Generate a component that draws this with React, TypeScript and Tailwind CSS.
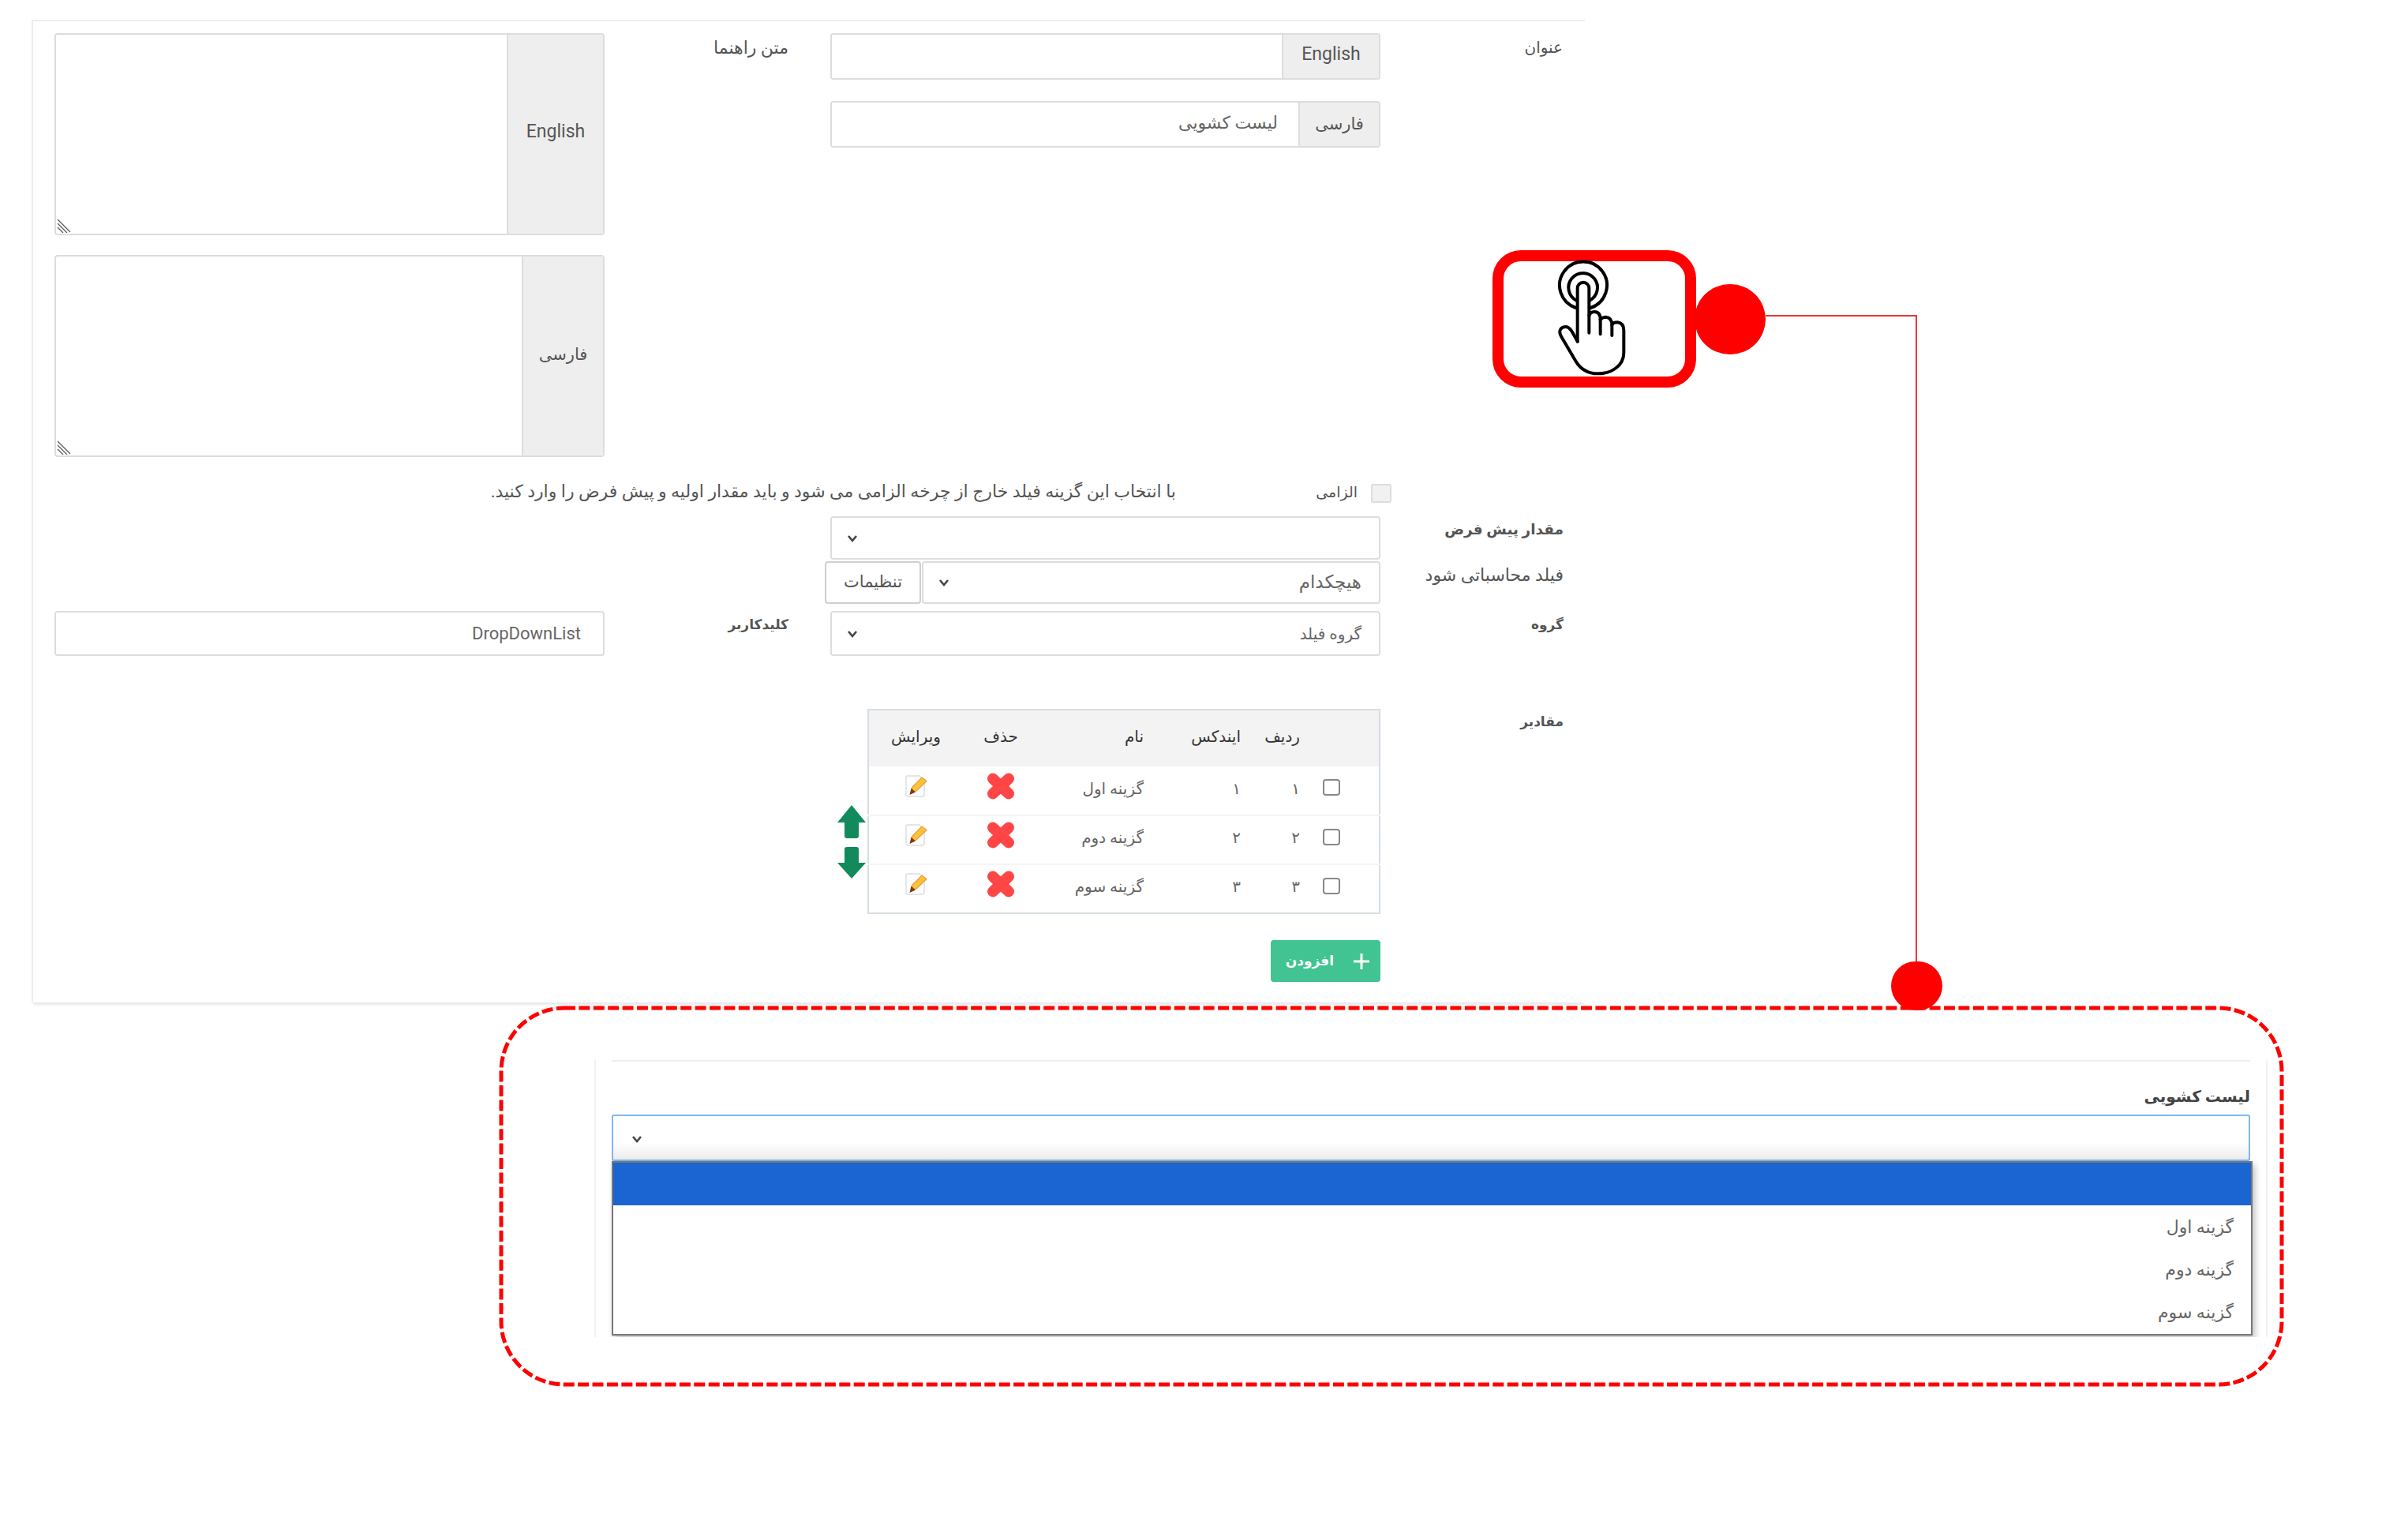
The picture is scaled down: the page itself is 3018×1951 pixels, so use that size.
const font = "font-['Roboto','DejaVu_Sans',sans-serif]";

function Chevron({ className }: { className?: string }) {
  return (
    <svg width="14" height="10" viewBox="0 0 14 10" className={className}>
      <path d="M2 2 L7 8 L12 2" fill="none" stroke="#444" strokeWidth="2.6" />
    </svg>
  );
}

function ResizeGrip() {
  return (
    <svg width="18" height="18" viewBox="0 0 18 18" className="absolute left-[1px] bottom-[1px]">
      <path d="M1 1 L17 17 M1 6 L13 18 M1 11 L8 18" stroke="#555" strokeWidth="1.2" fill="none" />
    </svg>
  );
}

function Addon({ children, className }: { children: React.ReactNode; className: string }) {
  return (
    <div className={`flex items-center justify-center bg-[#eeeeee] border-l-2 border-[#dddddd] text-[#555] ${className}`}>
      {children}
    </div>
  );
}

function InputGroup({ label, value, addonWidth, latin }: { label: string; value?: string; addonWidth: string; latin?: boolean }) {
  return (
    <div className="flex h-[59px] border-2 border-[#dddddd] rounded-[4px] overflow-hidden">
      <div className="flex-1 flex items-center justify-end pr-[26px] pb-[4px] text-[22px] text-[#666]">{value}</div>
      <Addon className={`${addonWidth} ${latin ? 'text-[23px] pb-[4px]' : 'text-[21px]'}`}>{label}</Addon>
    </div>
  );
}

function TextareaGroup({ label, addonWidth, latin }: { label: string; addonWidth: string; latin?: boolean }) {
  return (
    <div className="relative flex h-[256px] border-2 border-[#dddddd] rounded-[4px] overflow-hidden">
      <div className="flex-1" />
      <Addon className={`${addonWidth} ${latin ? 'text-[23px] pb-[6px]' : 'text-[21px] pb-[2px]'}`}>{label}</Addon>
      <ResizeGrip />
    </div>
  );
}

function SelectBox({ value, className }: { value?: string; className: string }) {
  return (
    <div className={`flex items-center justify-between border-2 border-[#dddddd] rounded-[4px] pl-[19px] pr-[22px] text-[#666] ${className}`}>
      <Chevron />
      <span>{value}</span>
    </div>
  );
}

function FieldLabel({ children, className }: { children: React.ReactNode; className: string }) {
  return <div className={`text-right text-[#555] ${className}`}>{children}</div>;
}

function DeleteIcon() {
  return (
    <svg width="36" height="34" viewBox="0 0 36 34" className="mx-auto">
      <path d="M8 7.5 L28 26.5 M28 7.5 L8 26.5" stroke="#ff4545" strokeWidth="14" strokeLinecap="round" fill="none" />
    </svg>
  );
}

function EditIcon() {
  return (
    <svg width="30" height="30" viewBox="0 0 30 30" className="mx-auto">
      <path d="M4 2 H19 L25 8 V25 Q25 28 22 28 H4 Q2 28 2 26 V4 Q2 2 4 2 Z" fill="#fdfdfd" stroke="#e6e6e6" strokeWidth="2" />
      <path d="M8 24 L10 16 L22 4 L28 8.5 L15 21 Z" fill="#fbc531" stroke="#f0964a" strokeWidth="1.2" />
      <path d="M6.5 26 L8.5 17.5 L14 22.5 Z" fill="#7a3d12" />
    </svg>
  );
}

function ArrowUp() {
  return (
    <svg width="38" height="42" viewBox="0 0 38 42">
      <path d="M19 0 L37 22 H28 V39 Q28 42 25 42 H13 Q10 42 10 39 V22 H1 Z" fill="#128a5c" />
    </svg>
  );
}

function ArrowDown() {
  return (
    <svg width="38" height="40" viewBox="0 0 38 40">
      <path d="M19 40 L37 20 H28 V3 Q28 0 25 0 H13 Q10 0 10 3 V20 H1 Z" fill="#128a5c" />
    </svg>
  );
}

const rows = [
  { n: '۱', name: 'گزینه اول' },
  { n: '۲', name: 'گزینه دوم' },
  { n: '۳', name: 'گزینه سوم' },
];

function ValuesTable() {
  return (
    <table className="w-[650px] h-[260px] table-fixed border-2 border-[#d6dee4] border-collapse text-[20px]">
      <thead>
        <tr className="bg-[#f3f3f3] h-[72px] text-[#333]">
          <th className="w-[120px] font-normal text-center pb-[6px]">ویرایش</th>
          <th className="w-[96px] font-normal text-center pb-[6px]">حذف</th>
          <th className="w-[133px] font-normal text-right pb-[6px]">نام</th>
          <th className="w-[123px] font-normal text-right pb-[6px]">ایندکس</th>
          <th className="w-[75px] font-normal text-right pb-[6px]">ردیف</th>
          <th />
        </tr>
      </thead>
      <tbody className="text-[#666]">
        {rows.map((r) => (
          <tr key={r.n} className="h-[62px] border-b-2 border-[#f5f5f5] last:border-b-0">
            <td className="pb-[12px]"><EditIcon /></td>
            <td className="pb-[12px]"><DeleteIcon /></td>
            <td className="text-right pb-[6px]">{r.name}</td>
            <td className="text-right pb-[6px]">{r.n}</td>
            <td className="text-right pb-[6px]">{r.n}</td>
            <td className="pl-[29px] pb-[8px]">
              <div className="w-[22px] h-[21px] border-2 border-[#888] rounded-[4px]" />
            </td>
          </tr>
        ))}
      </tbody>
    </table>
  );
}

function MainForm() {
  return (
    <div className="ml-[40px] mt-[24px] w-[1968px] h-[1245px] border-t-2 border-l-2 border-[#eeeeee] pl-[27px] pt-[15px] shadow-[0_5px_3px_-2px_#e8e8e8]">
      <div className="flex items-start">
        <div className="w-[697px] flex flex-col gap-[25px]">
          <TextareaGroup label="English" addonWidth="w-[122px]" latin />
          <TextareaGroup label="فارسی" addonWidth="w-[103px]" />
        </div>
        <FieldLabel className="w-[233px] pt-[2px] text-[22px]">متن راهنما</FieldLabel>
        <div className="ml-[53px] w-[697px] flex flex-col gap-[27px]">
          <InputGroup label="English" addonWidth="w-[123px]" latin />
          <InputGroup label="فارسی" value="لیست کشویی" addonWidth="w-[102px]" />
        </div>
        <FieldLabel className="w-[231px] pt-[3px] text-[20px]">عنوان</FieldLabel>
      </div>

      <div className="flex items-center h-[24px] mt-[34px] text-[#555]">
        <div dir="rtl" className="w-[1421px] text-[22px] mb-[6px] whitespace-nowrap">با انتخاب این گزینه فیلد خارج از چرخه الزامی می شود و باید مقدار اولیه و پیش فرض را وارد کنید.</div>
        <div className="w-[230px] text-right text-[19px] mb-[2px]">الزامی</div>
        <div className="ml-[17px] w-[26px] h-[24px] bg-[#f1f1f1] border-2 border-[#dddddd] rounded-[3px]" />
      </div>

      <div className="flex items-center mt-[17px]">
        <SelectBox className="ml-[983px] w-[697px] h-[55px]" />
        <FieldLabel className="w-[232px] font-bold text-[18.5px] mb-[20px]">مقدار پیش فرض</FieldLabel>
      </div>

      <div className="flex items-center mt-[2px]">
        <button className="ml-[976px] w-[122px] h-[54px] border-2 border-[#cfcfcf] rounded-[4px] text-[21px] text-[#555]">تنظیمات</button>
        <SelectBox value="هیچکدام" className="ml-[1px] w-[581px] h-[54px] text-[23px]" />
        <FieldLabel className="w-[232px] mb-[20px] text-[22px]">فیلد محاسباتی شود</FieldLabel>
      </div>

      <div className="flex items-center mt-[9px]">
        <div className="w-[697px] h-[57px] flex items-center justify-end pr-[28px] border-2 border-[#dddddd] rounded-[4px] text-[22px] text-[#666]">DropDownList</div>
        <FieldLabel className="w-[233px] font-bold text-[17px] mb-[22px]">کلیدکاربر</FieldLabel>
        <SelectBox value="گروه فیلد" className="ml-[53px] w-[697px] h-[57px] text-[20px]" />
        <FieldLabel className="w-[232px] font-bold text-[17px] mb-[22px]">گروه</FieldLabel>
      </div>

      <div className="flex items-start mt-[67px]">
        <div className="ml-[991px] w-[39px] mt-[122px] flex flex-col gap-[11px]">
          <ArrowUp />
          <ArrowDown />
        </div>
        <ValuesTable />
        <FieldLabel className="w-[232px] font-bold text-[17px] pt-[4px]">مقادیر</FieldLabel>
      </div>

      <div className="flex mt-[33px]">
        <button className="ml-[1541px] w-[139px] h-[53px] flex items-center justify-end gap-[24px] pr-[13px] bg-[#41c492] rounded-[4px] text-white text-[17px] font-bold">
          افزودن
          <svg width="22" height="22" viewBox="0 0 22 22">
            <path d="M11 1 V21 M1 11 H21" stroke="#fff" strokeWidth="3" />
          </svg>
        </button>
      </div>
    </div>
  );
}

function DropdownPreview() {
  return (
    <div className="absolute left-[753px] top-[1343px] w-[2120px] h-[351px] border-x-2 border-[#f2f2f2] pl-[20px] pr-[20px] overflow-hidden">
      <div className="h-[2px] bg-[#eeeeee]" />
      <div className="h-[67px] pt-[20px] flex items-center justify-end text-[20px] text-[#444] font-bold">لیست کشویی</div>
      <div className="h-[59px] flex items-center pl-[23px] pt-[2px] border-2 border-[#7db9ee] rounded-[3px] bg-gradient-to-b from-white from-60% to-[#ececec]">
        <Chevron />
      </div>
      <div className="mr-[-3px] h-[221px] border-2 border-[#777777] bg-white shadow-[3px_4px_8px_rgba(0,0,0,0.25)]">
        <div className="h-[54px] bg-[#1a65d1]" />
        <div className="flex flex-col pr-[22px] text-[22px] text-[#666]">
          <div className="h-[54px] flex items-center justify-end">گزینه اول</div>
          <div className="h-[54px] flex items-center justify-end">گزینه دوم</div>
          <div className="h-[54px] flex items-center justify-end">گزینه سوم</div>
        </div>
      </div>
    </div>
  );
}

function Callouts() {
  return (
    <>
      <div className="absolute left-[1891px] top-[317px] w-[258px] h-[174px] border-[14px] border-[#ff0000] rounded-[36px]" />
      <div className="absolute left-[2147px] top-[360px] w-[90px] h-[89px] rounded-full bg-[#ff0000]" />
      <div className="absolute left-[2237px] top-[399px] w-[192px] h-[2px] bg-[#e8383a]" />
      <div className="absolute left-[2427px] top-[399px] w-[2px] h-[822px] bg-[#e8383a]" />
      <div className="absolute left-[2396px] top-[1218px] w-[65px] h-[62px] rounded-full bg-[#ff0000]" />
      <svg className="absolute left-[1860px] top-[290px]" width="420" height="240" viewBox="0 0 1260 720">
        <g fill="none" stroke="#000" strokeWidth="12" strokeLinecap="round" strokeLinejoin="round">
          <path d="M410 300 A90 90 0 1 1 466 300" />
          <path d="M412 272 A55 55 0 1 1 462 272" />
          <path d="M416 428 V225 A22 22 0 0 1 460 225 V395" />
          <path d="M460 330 Q465 315 480 315 Q503 315 503 345 V400" />
          <path d="M503 345 Q510 335 525 335 Q547 338 547 365 V405" />
          <path d="M547 365 Q552 355 568 355 Q592 358 592 385 V470 C592 520 545 550 495 550 C455 550 425 530 408 500 L355 410 C340 385 355 372 372 372 C388 372 398 395 416 428" />
        </g>
      </svg>
      <svg className="absolute left-0 top-0 pointer-events-none" width="3018" height="1951">
        <rect x="635" y="1277" width="2256" height="477" rx="80" fill="none" stroke="#ff0000" strokeWidth="5" strokeDasharray="14 4.4" />
      </svg>
    </>
  );
}

export default function App() {
  return (
    <div className={`relative w-[3018px] h-[1951px] overflow-hidden bg-white ${font}`}>
      <div className="pt-px" />
      <MainForm />
      <DropdownPreview />
      <Callouts />
    </div>
  );
}
